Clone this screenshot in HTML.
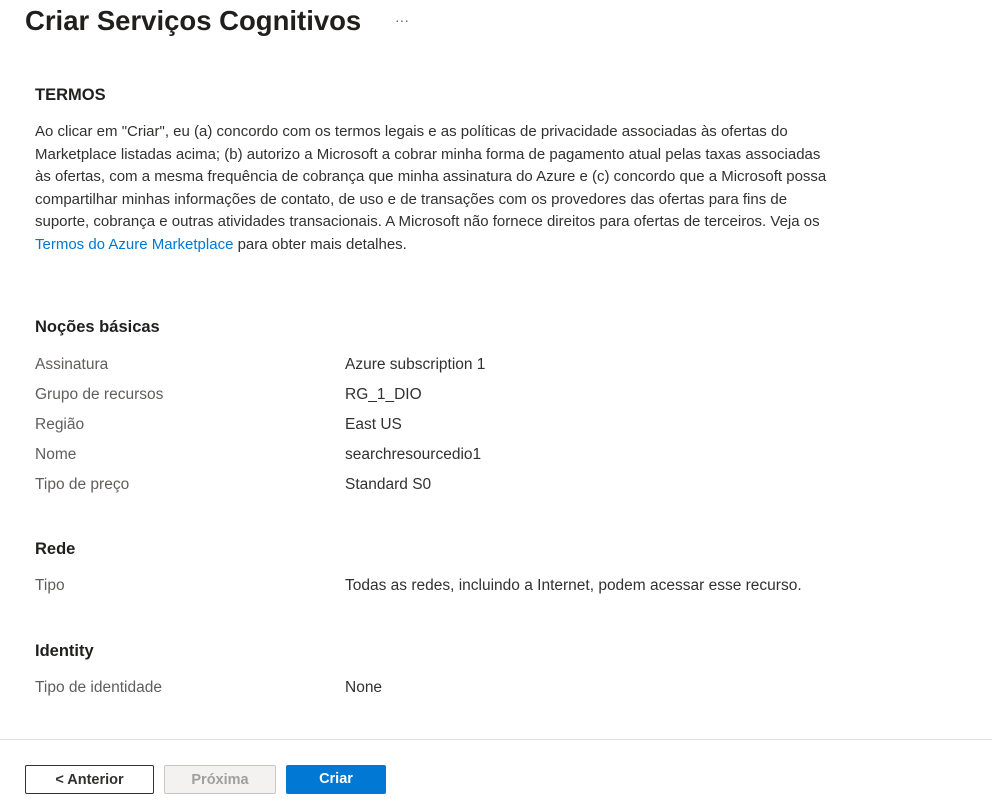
<!DOCTYPE html>
<html><head><meta charset="utf-8"><style>
body{margin:0;width:992px;height:809px;background:#fff;font-family:"Liberation Sans",sans-serif;color:#323130;position:relative;overflow:hidden}
.a{position:absolute;white-space:nowrap}
.t{font-size:27.5px;font-weight:600;color:#201f1e;left:25px;top:5px}
.h{font-size:16.5px;font-weight:bold;color:#201f1e;left:35px}
.p{font-size:15px;left:35px;top:121px;line-height:22.5px}
.l{font-size:15.5px;color:#605e5c;left:35px}
.v{font-size:15.5px;color:#323130;left:345px}
.btn{position:absolute;top:765px;height:29px;box-sizing:border-box;border-radius:2px;font-size:14.5px;font-weight:bold;text-align:center;line-height:28px}
</style></head><body>
<div class="a t">Criar Serviços Cognitivos</div>
<div class="a" style="left:395px;top:12px;font-size:14px;color:#605e5c">···</div>
<div class="a h" style="top:86px">TERMOS</div>
<div class="a p">Ao clicar em "Criar", eu (a) concordo com os termos legais e as políticas de privacidade associadas às ofertas do<br>Marketplace listadas acima; (b) autorizo a Microsoft a cobrar minha forma de pagamento atual pelas taxas associadas<br>às ofertas, com a mesma frequência de cobrança que minha assinatura do Azure e (c) concordo que a Microsoft possa<br>compartilhar minhas informações de contato, de uso e de transações com os provedores das ofertas para fins de<br>suporte, cobrança e outras atividades transacionais. A Microsoft não fornece direitos para ofertas de terceiros. Veja os<br><span style="color:#0078d4">Termos do Azure Marketplace</span> para obter mais detalhes.</div>
<div class="a h" style="top:318px">Noções básicas</div>
<div class="a l" style="top:356px">Assinatura</div><div class="a v" style="top:356px">Azure subscription 1</div>
<div class="a l" style="top:386px">Grupo de recursos</div><div class="a v" style="top:386px">RG_1_DIO</div>
<div class="a l" style="top:416px">Região</div><div class="a v" style="top:416px">East US</div>
<div class="a l" style="top:446px">Nome</div><div class="a v" style="top:446px">searchresourcedio1</div>
<div class="a l" style="top:476px">Tipo de preço</div><div class="a v" style="top:476px">Standard S0</div>
<div class="a h" style="top:540px">Rede</div>
<div class="a l" style="top:577px">Tipo</div><div class="a v" style="top:577px">Todas as redes, incluindo a Internet, podem acessar esse recurso.</div>
<div class="a h" style="top:642px">Identity</div>
<div class="a l" style="top:679px">Tipo de identidade</div><div class="a v" style="top:679px">None</div>
<div style="position:absolute;left:0;top:739px;width:992px;height:1px;background:#e1dfdd"></div>
<div class="btn" style="left:25px;width:129px;border:1px solid #323130;color:#323130">&lt; Anterior</div>
<div class="btn" style="left:164px;width:112px;border:1px solid #c8c6c4;background:#f3f2f1;color:#a19f9d">Próxima</div>
<div class="btn" style="left:286px;width:100px;background:#0078d4;color:#fff;line-height:29px">Criar</div>
</body></html>
